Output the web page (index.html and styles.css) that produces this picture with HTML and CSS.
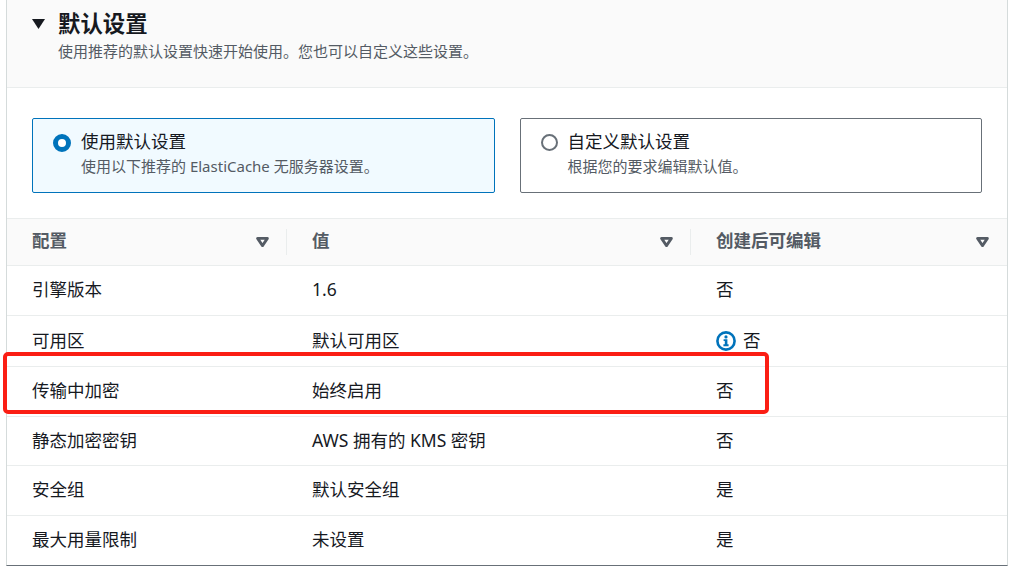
FILE: index.html
```html
<!DOCTYPE html>
<html lang="zh-CN">
<head>
<meta charset="utf-8">
<title>默认设置</title>
<link rel="stylesheet" href="styles.css">
</head>
<body>
<section class="panel">
  <header class="panel-head">
    <svg class="caret" width="13" height="10" viewBox="0 0 13 10"><path d="M0 0H13L6.5 10Z" fill="#16191f"/></svg>
    <div>
      <h2 class="title">默认设置</h2>
      <p class="subtitle">使用推荐的默认设置快速开始使用。您也可以自定义这些设置。</p>
    </div>
  </header>
  <div class="cards">
    <div class="card card-on">
      <span class="radio radio-on"></span>
      <div>
        <div class="card-title">使用默认设置</div>
        <div class="card-desc">使用以下推荐的 ElastiCache 无服务器设置。</div>
      </div>
    </div>
    <div class="card">
      <span class="radio"></span>
      <div>
        <div class="card-title">自定义默认设置</div>
        <div class="card-desc">根据您的要求编辑默认值。</div>
      </div>
    </div>
  </div>
  <div class="table">
    <div class="row row-head">
      <div class="th"><span class="th-label">配置</span><svg class="sort" width="13" height="10" viewBox="0 0 13 10"><path d="M1.6 1.4H11.4L6.5 8.6Z" fill="#fff" stroke="#545b64" stroke-width="2.8" stroke-linejoin="round"/></svg></div>
      <div class="th"><span class="th-label">值</span><svg class="sort" width="13" height="10" viewBox="0 0 13 10"><path d="M1.6 1.4H11.4L6.5 8.6Z" fill="#fff" stroke="#545b64" stroke-width="2.8" stroke-linejoin="round"/></svg></div>
      <div class="th"><span class="th-label">创建后可编辑</span><svg class="sort" width="13" height="10" viewBox="0 0 13 10"><path d="M1.6 1.4H11.4L6.5 8.6Z" fill="#fff" stroke="#545b64" stroke-width="2.8" stroke-linejoin="round"/></svg></div>
    </div>
    <div class="row"><div class="td">引擎版本</div><div class="td">1.6</div><div class="td">否</div></div>
    <div class="row row-tall"><div class="td">可用区</div><div class="td">默认可用区</div><div class="td"><svg class="info" width="20" height="20" viewBox="0 0 20 20"><circle cx="10" cy="10" r="8.6" fill="none" stroke="#0073bb" stroke-width="2.6"/><circle cx="10" cy="5.9" r="1.6" fill="#0073bb"/><path d="M7.6 8.3H11.4V13.3H12.6V15.2H7.4V13.3H8.8V10.1H7.6Z" fill="#0073bb"/></svg>否</div></div>
    <div class="row"><div class="td">传输中加密</div><div class="td">始终启用</div><div class="td">否</div></div>
    <div class="row row-short"><div class="td">静态加密密钥</div><div class="td">AWS 拥有的 KMS 密钥</div><div class="td">否</div></div>
    <div class="row"><div class="td">安全组</div><div class="td">默认安全组</div><div class="td">是</div></div>
    <div class="row"><div class="td">最大用量限制</div><div class="td">未设置</div><div class="td">是</div></div>
  </div>
  <div class="highlight"></div>
</section>
</body>
</html>
```

FILE: styles.css
```css
* { box-sizing: border-box; }
html, body { margin: 0; padding: 0; height: 100%; overflow: hidden; background: #fff; }
body {
  font-family: "Noto Sans", "Noto Sans CJK SC", sans-serif;
  color: #16191f;
  padding: 0 4px 1px 6px;
}
.panel {
  position: relative;
  height: 566px;
  border-left: 1px solid #d5dbdb;
  border-right: 1px solid #d5dbdb;
  border-bottom: 1px solid #687078;
}
.panel-head {
  height: 88px;
  display: flex;
  gap: 13px;
  padding: 17px 0 0 25px;
  background: #fafafa;
  border-bottom: 1px solid #eaeded;
}
.caret { margin-top: 2px; flex: none; }
.title { margin: 0; font-size: 22.4px; line-height: 14px; font-weight: 700; }
.subtitle { margin: 10px 0 0; font-size: 15px; line-height: 20px; color: #545b64; }
.cards {
  height: 130px;
  display: flex;
  gap: 25px;
  padding: 30px 25px 0;
}
.card {
  flex: 1;
  height: 75px;
  display: flex;
  gap: 10px;
  padding: 12px 20px;
  background: #fff;
  border: 1px solid #687078;
  border-radius: 2px;
}
.card-on { background: #f1faff; border-color: #0073bb; }
.radio {
  flex: none;
  width: 17px;
  height: 17px;
  margin-top: 3px;
  border-radius: 50%;
  border: 2px solid #687078;
  background: #fff;
}
.radio-on { width: 18px; height: 18px; border: 5px solid #0073bb; }
.card-title { font-size: 17.5px; line-height: 20px; }
.card-desc { font-size: 15px; line-height: 20px; margin-top: 5px; color: #545b64; }
.table { border-top: 1px solid #eaeded; }
.row {
  display: grid;
  grid-template-columns: 280px 404px 1fr;
  height: 50px;
  border-bottom: 1px solid #eaeded;
}
.row:last-child { border-bottom-color: transparent; }
.row-tall { height: 51px; }
.row-short { height: 49px; }
.row-head { height: 47px; background: #fafafa; }
.th {
  position: relative;
  display: flex;
  align-items: center;
  justify-content: space-between;
  padding: 0 18px 0 25px;
  font-size: 17.5px;
  font-weight: 700;
  color: #545b64;
}
.th-label { margin-bottom: 5px; }
.th + .th::before {
  content: "";
  position: absolute;
  left: -1px;
  top: 10px;
  bottom: 10px;
  width: 1px;
  background: #eaeded;
}
.sort { flex: none; }
.td {
  display: flex;
  align-items: center;
  padding-left: 25px;
  padding-bottom: 4px;
  font-size: 17.5px;
}
.info { margin: 4px 7px 0 0; flex: none; }
.highlight {
  position: absolute;
  left: -4px;
  top: 352px;
  width: 766px;
  height: 62px;
  border: 4px solid #fb1e14;
  border-radius: 5px;
}
```
